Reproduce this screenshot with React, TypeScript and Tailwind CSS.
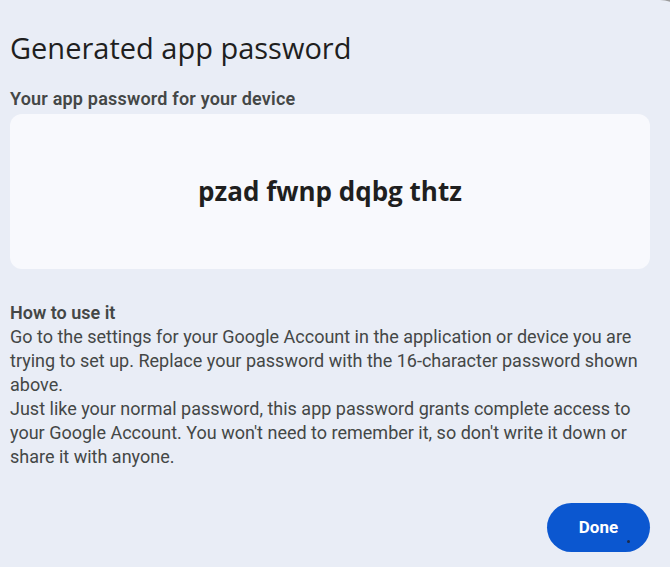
export default function App() {
  return (
    <div className="w-[670px] h-[567px] overflow-hidden bg-[#9c9c9c]">
      <div
        className="w-[690px] h-[567px] bg-[#e9edf6] rounded-tr-[30px] px-[10px] pt-[30px] text-[#1f1f1f]"
        style={{ fontFamily: "Roboto, 'Open Sans', Arial, sans-serif" }}
      >
        <div className="w-[640px]">
          <h1
            className="text-[29px] leading-[36px] font-normal text-[#1f1f1f]"
            style={{ fontFamily: "'Open Sans', Roboto, sans-serif" }}
          >
            Generated app password
          </h1>
          <div className="mt-[22px] text-[18px] leading-[22px] font-semibold text-[#444746] tracking-[0.2px]">
            Your app password for your device
          </div>
          <div className="mt-[4px] h-[155px] rounded-[12px] bg-[#f8f9fd] flex items-center justify-center">
            <span
              className="text-[26px] font-bold text-[#1f1f1f]"
              style={{ fontFamily: "'Open Sans', Roboto, sans-serif" }}
            >
              pzad fwnp dqbg thtz
            </span>
          </div>
          <div className="mt-[32px] text-[18px] leading-[24px] text-[#444746]">
            <div className="font-semibold">How to use it</div>
            <p>
              Go to the settings for your Google Account in the application or device you are trying to set up.
              Replace your password with the 16-character password shown above.
            </p>
            <p>
              Just like your normal password, this app password grants complete access to your Google Account. You
              won't need to remember it, so don't write it down or share it with anyone.
            </p>
          </div>
          <div className="mt-[34px] flex justify-end">
            <button
              type="button"
              className="relative w-[103px] h-[49px] rounded-full bg-[#0b57d0] text-white text-[17px] font-bold"
            >
              Done
              <span className="absolute left-[80px] top-[37px] w-[3px] h-[3px] rounded-full bg-[#1b2a4a]" />
            </button>
          </div>
        </div>
      </div>
    </div>
  );
}
